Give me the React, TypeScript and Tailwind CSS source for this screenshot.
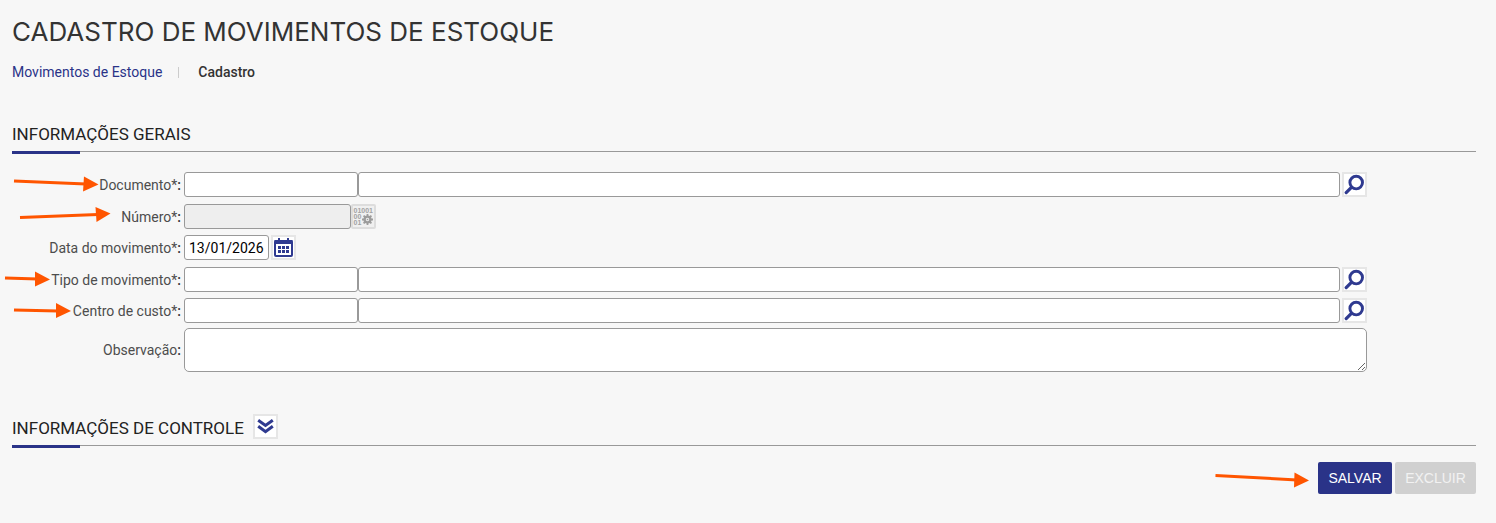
import type { ReactNode } from "react";

const iconButton =
  "flex h-[25px] w-[25px] shrink-0 items-center justify-center border-2 border-[#e6e6e6] bg-white";
const field =
  "h-[25px] rounded-[3px] border border-[#999999] bg-white px-1 text-[14px] text-black outline-none";

function Arrow({ line, head }: { line: string; head: string }) {
  return (
    <svg
      className="pointer-events-none absolute top-0 -left-3 h-[25px] w-[184px] overflow-visible"
      viewBox="0 0 184 25"
      aria-hidden="true"
    >
      <path d={line} stroke="#ff5500" strokeWidth="3" />
      <path d={head} fill="#ff5500" />
    </svg>
  );
}

function SearchIcon() {
  return (
    <svg width="21" height="21" viewBox="0 0 21 21" fill="none" className="shrink-0" aria-hidden="true">
      <circle cx="12.2" cy="8.6" r="6.3" stroke="#2f3a90" strokeWidth="2.9" />
      <path d="M7.4 13.4L2.2 18.6" stroke="#2f3a90" strokeWidth="3.2" strokeLinecap="round" />
    </svg>
  );
}

function CalendarIcon() {
  return (
    <svg width="21" height="21" viewBox="0 0 21 21" aria-hidden="true" className="shrink-0">
      <rect x="2" y="4" width="17" height="15" rx="1" fill="none" stroke="#2f3a90" strokeWidth="2" />
      <path d="M1.5 3h18v4h-18z" fill="#2f3a90" />
      <path d="M6 1v3M15 1v3" stroke="#2f3a90" strokeWidth="2" />
      <path
        d="M5 9h3v3H5zM9 9h3v3H9zM13 9h3v3h-3zM5 13h3v3H5zM9 13h3v3H9zM13 13h3v3h-3z"
        fill="#2f3a90"
      />
    </svg>
  );
}

function SequenceIcon() {
  return (
    <svg width="21" height="21" viewBox="0 0 21 21" aria-hidden="true" className="shrink-0">
      <g fill="#a3a3a3" fontFamily="Liberation Sans, sans-serif" fontWeight="700" fontSize="7">
        <text x="0.5" y="7">01001</text>
        <text x="0.5" y="13">00</text>
        <text x="0.5" y="19">01</text>
      </g>
      <circle cx="14.5" cy="13.5" r="2.9" fill="none" stroke="#9c9c9c" strokeWidth="2.4" />
      <path
        d="M14.5 8v2M14.5 17v2M9 13.5h2M18 13.5h2M10.6 9.6l1.5 1.5M16.9 15.9l1.5 1.5M18.4 9.6l-1.5 1.5M12.1 15.9l-1.5 1.5"
        stroke="#9c9c9c"
        strokeWidth="1.8"
      />
      <circle cx="14.5" cy="13.5" r="0.8" fill="#9c9c9c" />
    </svg>
  );
}

function ExpandIcon() {
  return (
    <svg width="21" height="21" viewBox="0 0 21 21" fill="none" aria-hidden="true" className="shrink-0">
      <path d="M3.2 4.2l7.3 5.3 7.3-5.3M3.2 10.2l7.3 5.5 7.3-5.5" stroke="#2f3a90" strokeWidth="3" />
    </svg>
  );
}

function Row({
  id,
  label,
  required = true,
  className,
  arrow,
  children,
}: {
  id: string;
  label: string;
  required?: boolean;
  className: string;
  arrow?: ReactNode;
  children: ReactNode;
}) {
  return (
    <div className={`relative flex items-center ${className}`}>
      {arrow}
      <label htmlFor={id} className="mr-[3px] w-[169px] shrink-0 text-right text-[14px] leading-5 text-[#4d4d4d]">
        {label}
        {required && "*"}
        <span className="font-medium text-[#333333]">:</span>
      </label>
      {children}
    </div>
  );
}

function Lookup({ id, label }: { id: string; label: string }) {
  return (
    <>
      <input id={id} type="text" className={`${field} w-[174px] shrink-0`} />
      <input type="text" aria-label={`${label} descrição`} className={`${field} min-w-0 flex-1`} />
      <button type="button" aria-label={`Pesquisar ${label}`} className={`${iconButton} ml-0.5`}>
        <SearchIcon />
      </button>
    </>
  );
}

function SectionTitle({ children, action }: { children: ReactNode; action?: ReactNode }) {
  return (
    <div>
      <div className="flex h-[34px] items-center gap-[9px]">
        <h2 className="text-[17px] leading-6 text-[#222222]">{children}</h2>
        {action}
      </div>
      <div className="h-[3px] border-t border-[#999999]">
        <div className="-mt-px h-[3px] w-[68px] bg-[#2a3388]" />
      </div>
    </div>
  );
}

export default function App() {
  return (
    <main className="min-h-screen bg-[#f7f7f7] pt-3 pr-5 pb-7 pl-3 font-[Roboto,sans-serif]">
      <h1 className="font-[Inter,sans-serif] text-[26px] leading-10 text-[#333333]">
        CADASTRO DE MOVIMENTOS DE ESTOQUE
      </h1>
      <nav aria-label="Navegação" className="mt-2.5 flex h-5 items-center text-[14px] leading-5">
        <a href="#movimentos" className="text-[#2a3388]">
          Movimentos de Estoque
        </a>
        <span className="mr-[19px] ml-4 h-[11px] w-px bg-[#cccccc]" />
        <span aria-current="page" className="font-medium text-[#333333]">
          Cadastro
        </span>
      </nav>

      <form onSubmit={(e) => e.preventDefault()}>
        <section className="mt-[35px]">
          <SectionTitle>INFORMAÇÕES GERAIS</SectionTitle>
          <div className="mt-[18px] pr-[109px]">
            <Row
              id="documento"
              label="Documento"
              className="mb-[7px]"
              arrow={<Arrow line="M14 9L86 12" head="M84 4.5L98.5 12.5L83 19.5z" />}
            >
              <Lookup id="documento" label="Documento" />
            </Row>
            <Row
              id="numero"
              label="Número"
              className="mb-1.5"
              arrow={<Arrow line="M20 13.5L98 10.5" head="M95.5 3L110.5 9.5L96.5 18z" />}
            >
              <input
                id="numero"
                type="text"
                disabled
                className="h-[25px] w-[167px] rounded-[3px] border border-[#999999] bg-[#eeeeee] px-1"
              />
              <button
                type="button"
                disabled
                aria-label="Gerar número"
                className="flex h-[25px] w-[25px] shrink-0 items-center justify-center rounded-[2px] border-2 border-[#dddddd] bg-[#f0f0f0]"
              >
                <SequenceIcon />
              </button>
            </Row>
            <Row id="data" label="Data do movimento" className="mb-[7px]">
              <input id="data" type="text" defaultValue="13/01/2026" className={`${field} w-[85px]`} />
              <button type="button" aria-label="Abrir calendário" className={`${iconButton} ml-0.5`}>
                <CalendarIcon />
              </button>
            </Row>
            <Row
              id="tipo"
              label="Tipo de movimento"
              className="mb-1.5"
              arrow={<Arrow line="M5 11L38 12" head="M35 4.5L50 12.5L35 19.5z" />}
            >
              <Lookup id="tipo" label="Tipo de movimento" />
            </Row>
            <Row
              id="centro"
              label="Centro de custo"
              className="mb-[5px]"
              arrow={<Arrow line="M14 12L58 13" head="M56 5L71 13L56 20z" />}
            >
              <Lookup id="centro" label="Centro de custo" />
            </Row>
            <Row id="observacao" label="Observação" required={false} className="">
              <textarea
                id="observacao"
                className="block h-11 min-w-0 flex-1 resize rounded-[5px] border border-[#999999] bg-white px-1 text-[14px] outline-none"
              />
            </Row>
          </div>
        </section>

        <section className="mt-[39px]">
          <SectionTitle
            action={
              <button type="button" aria-label="Expandir" className={`${iconButton} mb-1`}>
                <ExpandIcon />
              </button>
            }
          >
            INFORMAÇÕES DE CONTROLE
          </SectionTitle>
        </section>

        <div className="mt-3.5 flex justify-end gap-[3px] font-['Liberation_Sans',sans-serif] text-[14px] leading-5">
          <div className="relative">
            <svg
              className="pointer-events-none absolute top-0 right-full h-8 w-[104px] overflow-visible"
              viewBox="0 0 104 32"
              aria-hidden="true"
            >
              <path d="M1.5 13.5L83 18" stroke="#ff5500" strokeWidth="3" />
              <path d="M80.5 10.5L95 18.5L80 25.5z" fill="#ff5500" />
            </svg>
            <button type="submit" className="h-8 w-[74px] rounded-[2px] bg-[#2a3388] text-white">
              SALVAR
            </button>
          </div>
          <button type="button" disabled className="h-8 w-[81px] rounded-[2px] bg-[#d0d0d0] text-[#f2f2f2]">
            EXCLUIR
          </button>
        </div>
      </form>
    </main>
  );
}
